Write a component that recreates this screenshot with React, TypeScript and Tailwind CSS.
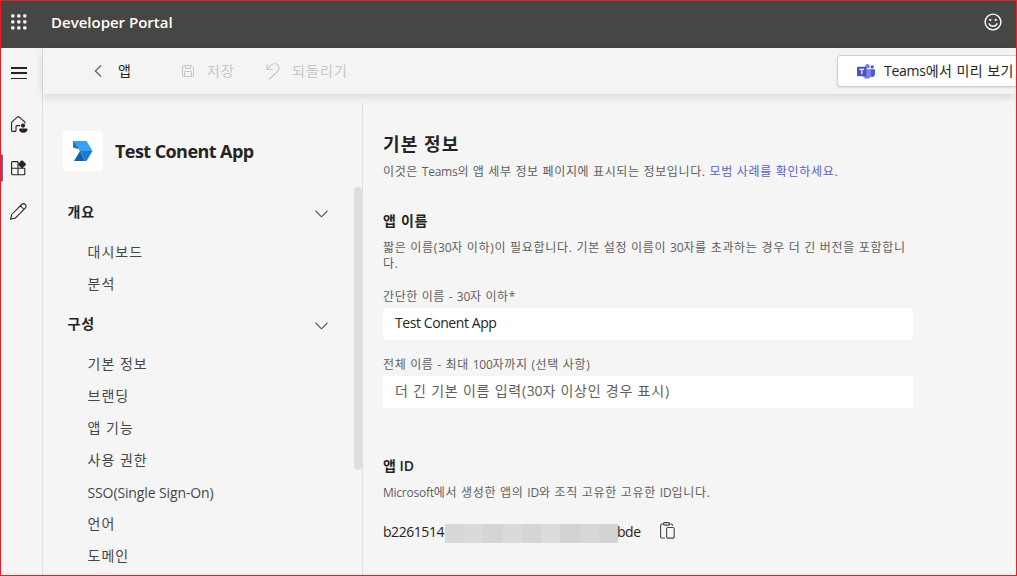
import type { ReactNode } from "react";

function L({ children }: { children: ReactNode }) {
  return <span className="tracking-[-0.25px]">{children}</span>;
}

function WaffleIcon() {
  return (
    <svg width="16" height="16" viewBox="0 0 16 16" fill="#fff" className="block">
      {[0, 6, 12].map((y) =>
        [0, 6, 12].map((x) => <rect key={`${x}-${y}`} x={x + 0.2} y={y + 0.2} width="3.2" height="3.2" rx="1" />),
      )}
    </svg>
  );
}

function SmileIcon() {
  return (
    <svg width="18" height="18" viewBox="0 0 18 18" fill="none" stroke="#fff" strokeWidth="1.4" strokeLinecap="round">
      <circle cx="9" cy="9" r="7.9" />
      <path d="M5 10.800c.8 1.700 2.300 2.500 4 2.500s3.200-.8 4-2.500" />
      <circle cx="6.300" cy="6.900" r="1.100" fill="#fff" stroke="none" />
      <circle cx="11.700" cy="6.900" r="1.100" fill="#fff" stroke="none" />
    </svg>
  );
}

function SaveIcon() {
  return (
    <svg width="12" height="12" viewBox="0 0 12 12" fill="none" stroke="#c8c6c4" strokeWidth="1">
      <path d="M2 .5h7L11.500 3v7a1.500 1.500 0 0 1-1.500 1.500H2A1.500 1.500 0 0 1 .5 10V2A1.500 1.500 0 0 1 2 .5Z" />
      <path d="M3.500.5v3h5v-3M2.500 11.500v-5h7v5" />
    </svg>
  );
}

function UndoIcon() {
  return (
    <svg width="14" height="17" viewBox="0 0 14 17" fill="none" stroke="#c8c6c4" strokeWidth="1.100" strokeLinecap="round" strokeLinejoin="round">
      <path d="M1 1v5.500h5.500M1.200 6.200 5 2.300c2-2 4.800-2 6.600-.3 1.900 1.800 1.900 4.600 0 6.500L3.500 16" />
    </svg>
  );
}

function TeamsIcon() {
  return (
    <svg width="18" height="15" viewBox="0 0 18 15">
      <circle cx="15.200" cy="2.900" r="1.700" fill="#5059c9" />
      <circle cx="10.500" cy="2.300" r="2.300" fill="#7b83eb" />
      <path d="M12 5.300h5.400c.3 0 .6.300.6.600v4.200a3 3 0 0 1-5 2.200z" fill="#5059c9" />
      <path d="M6 5.300h8v5.400a4 4 0 0 1-8 0z" fill="#7b83eb" />
      <rect x="0" y="2.800" width="9.500" height="9.500" rx=".8" fill="#4b53bc" />
      <path d="M2.500 5.300h4.600M4.800 5.300v4.900" stroke="#fff" strokeWidth="1.200" fill="none" />
    </svg>
  );
}

function HomeIcon() {
  return (
    <svg width="17" height="18" viewBox="0 0 17 18" fill="none" stroke="#252423" strokeWidth="1.100" strokeLinejoin="round">
      <path d="M14 7.500V7c0-.6-.2-1-.6-1.400L8.300 1.100a1.500 1.500 0 0 0-2 0L1.200 5.600C.8 6 .6 6.400.6 7v7.400c0 .6.400 1 1 1H4c.6 0 1-.4 1-1V10.600c0-.6.400-1 1-1h3" />
      <circle cx="12" cy="9.600" r="2.100" fill="#252423" stroke="none" />
      <path d="M9 12.600h6.600c.5 0 .9.400.9.900 0 1.900-1.700 3.200-4.200 3.200s-4.200-1.300-4.200-3.200c0-.5.400-.9.900-.9Z" fill="#252423" stroke="none" />
    </svg>
  );
}

function AppsIcon() {
  return (
    <svg width="16" height="16" viewBox="0 0 16 16" fill="none" stroke="#252423" strokeWidth="1.100">
      <path d="M7 1.600H1.600c-.6 0-1 .4-1 1v11.200c0 .6.400 1 1 1h11.200c.6 0 1-.4 1-1V8.200M7 1.600v13.200M.6 8.200h13.200" />
      <rect x="7.900" y="1.200" width="6.200" height="6.200" rx="1.200" transform="rotate(45 11 4.300)" fill="#252423" stroke="none" />
    </svg>
  );
}

function PencilIcon() {
  return (
    <svg width="17" height="17" viewBox="0 0 17 17" fill="none" stroke="#252423" strokeWidth="1.050" strokeLinejoin="round">
      <path d="M15.300 1.500a2.600 2.600 0 0 0-3.600 0L2.200 11c-.3.300-.5.600-.6 1L.6 16.200l4.200-1c.4-.1.700-.3 1-.6l9.500-9.500a2.600 2.600 0 0 0 0-3.600ZM10.400 2.900l3.600 3.600" />
    </svg>
  );
}

function AppLogo() {
  return (
    <svg width="20" height="20" viewBox="0 0 20 20">
      <path d="M0 0h13.500L19.500 10H7z" fill="#38a0f0" />
      <path d="M0 6.500V0l5.500 6.800L4.800 8z" fill="#1976c8" />
      <path d="M0 0h9L7 10 5.500 6.800z" fill="#38a0f0" />
      <path d="M7 10 1 20h11z" fill="#0f62ad" />
      <path d="M7 10h12.500l-6 10H12z" fill="#177bd0" />
    </svg>
  );
}

function ChevronDown() {
  return (
    <svg width="13" height="8" viewBox="0 0 13 8" fill="none" stroke="#484644" strokeWidth="1.100">
      <path d="m.5.8 6 6 6-6" />
    </svg>
  );
}

function CopyIcon() {
  return (
    <svg width="15" height="17" viewBox="0 0 15 17" fill="none" stroke="#484644" strokeWidth="1.100">
      <path d="M5 16H2c-.8 0-1.400-.5-1.400-1.300V3.300C.6 2.500 1.200 2 2 2h1.500M9.500 2H11c.8 0 1.400.5 1.400 1.300v.7" />
      <rect x="3.500" y=".6" width="6" height="2.500" rx="1.200" />
      <rect x="6.600" y="5.500" width="7.600" height="10.600" rx="1.300" />
    </svg>
  );
}

function Section({ title, items }: { title: string; items: string[] }) {
  return (
    <section className="mb-2">
      <div className="flex h-8 items-center justify-between pr-[26px] pl-[24.5px]">
        <h3 className="text-sm leading-8 font-semibold tracking-[0.8px] text-[#252423]">{title}</h3>
        <span className="mt-[3px]"><ChevronDown /></span>
      </div>
      <ul className="mt-2 pl-[44.5px]">
        {items.map((item) => (
          <li key={item} className={item.startsWith("SSO") ? "h-8 text-sm leading-[34px] tracking-[-0.12px]" : "h-8 text-sm leading-8 tracking-[1px]"}>
            {item}
          </li>
        ))}
      </ul>
    </section>
  );
}

const redaction = ["bg-[#d8d8d8]", "bg-[#dadada]", "bg-[#d3d6d5]", "bg-[#d9dada]", "bg-[#d7d6d4]", "bg-[#dcdcdc]", "bg-[#d2d2d2]", "bg-[#d7d7d6]", "bg-[#d3d3d3]"];

export default function App() {
  return (
    <div className="flex h-[576px] w-[1017px] flex-col overflow-hidden border border-[#ed1c24] bg-[#f5f5f5] font-['Open_Sans','Noto_Sans_CJK_KR',sans-serif] text-[#484644]">
      <header className="flex h-[47px] shrink-0 items-center bg-[#484644] pr-[14px] pb-[5px] pl-[10px]">
        <WaffleIcon />
        <h1 className="ml-[24px] text-[15px] leading-5 font-semibold text-white">Developer Portal</h1>
        <span className="ml-auto"><SmileIcon /></span>
      </header>
      <div className="flex min-h-0 flex-1">
        <nav className="flex w-[42px] shrink-0 flex-col border-r border-[#e1dfdd]">
          <button className="mt-[19px] ml-[10px] flex h-[12px] w-4 flex-col justify-between" aria-label="menu">
            <span className="h-[1.5px] w-4 bg-[#252423]" />
            <span className="h-[1.5px] w-4 bg-[#252423]" />
            <span className="h-[1.5px] w-4 bg-[#252423]" />
          </button>
          <span className="mt-[37px] ml-[10px] h-[18px]"><HomeIcon /></span>
          <div className="mt-[20px] flex h-7 items-center">
            <span className="h-7 w-[2px] rounded-r-sm bg-[#5b5fc7]" />
            <span className="ml-[8px]"><AppsIcon /></span>
          </div>
          <span className="mt-[21px] ml-[9px]"><PencilIcon /></span>
        </nav>
        <div className="flex min-w-0 flex-1 flex-col">
          <div className="z-10 flex h-[46px] shrink-0 items-center overflow-visible bg-[#f4f4f4] text-sm tracking-[1px] shadow-[0_3px_9px_rgba(0,0,0,0.13)]">
            <svg width="8" height="12" viewBox="0 0 8 12" fill="none" stroke="#605e5c" strokeWidth="1.200" className="ml-[51px]">
              <path d="M7 .5 1.300 6 7 11.500" />
            </svg>
            <span className="mb-px ml-[16px] w-[14px] leading-5 text-[#252423]">앱</span>
            <span className="ml-[50px]"><SaveIcon /></span>
            <span className="mb-px ml-[13px] w-[28px] leading-5 whitespace-nowrap text-[#c8c6c4]">저장</span>
            <span className="ml-[31px]"><UndoIcon /></span>
            <span className="mb-px ml-[12px] leading-5 tracking-[1.1px] text-[#c8c6c4]">되돌리기</span>
            <button className="ml-auto flex h-8 w-[179px] shrink-0 items-center rounded-l border border-r-0 border-[#d1d1d1] bg-white pl-[19px] tracking-[0.45px] whitespace-nowrap text-[#252423] shadow-[0_1px_2px_rgba(0,0,0,0.1)]">
              <TeamsIcon />
              <span className="mb-px ml-[9px] leading-5"><L>Teams</L>에서 미리 보기</span>
            </button>
          </div>
          <div className="flex min-h-0 flex-1">
            <aside className="mt-[9px] flex w-[320px] shrink-0 flex-col border-r border-[#e1dfdd]">
              <div className="mt-7 flex h-10 items-center pl-[20px]">
                <div className="flex size-10 items-center justify-center rounded bg-white"><AppLogo /></div>
                <h2 className="ml-[12px] text-lg leading-6 font-bold tracking-[-0.57px] text-[#252423]">Test Conent App</h2>
              </div>
              <div className="mt-4 flex min-h-0 flex-1">
                <div className="min-w-0 flex-1 overflow-hidden pt-[9px]">
                  <Section title="개요" items={["대시보드", "분석"]} />
                  <Section title="구성" items={["기본 정보", "브랜딩", "앱 기능", "사용 권한", "SSO(Single Sign-On)", "언어", "도메인"]} />
                </div>
                <div className="h-[283px] w-2 rounded-full bg-[#dedede]" />
              </div>
            </aside>
            <main className="flex-1 pt-[38px] pl-[20px] text-xs leading-4 text-[#605e5c]">
              <h2 className="text-lg leading-6 font-bold tracking-[1.1px] text-[#252423]">기본 정보</h2>
              <p className="mt-2 tracking-[0.64px]">
                이것은 <L>Teams</L>의 앱 세부 정보 페이지에 표시되는 정보입니다. <a className="tracking-[0.7px] text-[#5b5fc7]">모범 사례를 확인하세요.</a>
              </p>
              <h3 className="mt-[31px] text-sm leading-5 font-semibold tracking-[0.7px] text-[#252423]">앱 이름</h3>
              <p className="mt-[9px] tracking-[0.7px] whitespace-nowrap">
                짧은 이름(<L>30</L>자 이하)이 필요합니다. 기본 설정 이름이 <L>30</L>자를 초과하는 경우 더 긴 버전을 포함합니
                <br />
                다.
              </p>
              <p className="mt-[17px] tracking-[0.6px]">간단한 이름 - <L>30</L>자 이하*</p>
              <div className="mt-[3px] h-8 w-[530px] rounded bg-white pl-3 text-sm leading-[30px] tracking-[-0.42px] text-[#252423]">Test Conent App</div>
              <p className="mt-[17px] tracking-[0.65px]">전체 이름 - 최대 <L>100</L>자까지 (선택 사항)</p>
              <div className="mt-[3px] h-8 w-[530px] rounded bg-white pl-3 text-sm leading-[30px] tracking-[0.78px] text-[#605e5c]">더 긴 기본 이름 입력(<L>30</L>자 이상인 경우 표시)</div>
              <h3 className="mt-12 text-sm leading-5 font-semibold text-[#252423]">앱 ID</h3>
              <p className="mt-[9px] tracking-[0.7px]"><L>Microsoft</L>에서 생성한 앱의 <L>ID</L>와 조직 고유한 고유한 <L>ID</L>입니다.</p>
              <div className="mt-[21px] flex h-5 items-center text-sm leading-5 text-[#252423]">
                <span className="w-[62px] tracking-[-0.45px]">b2261514</span>
                <span className="mt-[2px] flex h-[19px] w-[173px]">
                  {redaction.map((c, i) => <span key={i} className={`h-full flex-1 ${c}`} />)}
                </span>
                <span className="ml-[-1px] w-[24px] tracking-[-0.5px]">bde</span>
                <span className="mt-[-3px] ml-[19px]"><CopyIcon /></span>
              </div>
            </main>
          </div>
        </div>
      </div>
    </div>
  );
}
